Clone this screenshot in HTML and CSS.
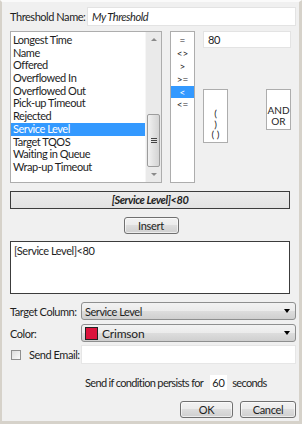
FILE: index.html
```html
<!DOCTYPE html>
<html lang="en">
<head>
    <meta charset="UTF-8">
    <meta name="viewport" content="width=device-width, initial-scale=1.0">
    <title>Threshold</title>
    <link rel="stylesheet" href="styles.css">
</head>
<body>
    <div class="dialog">
        <div class="name-row">
            <label class="name-label">Threshold Name:</label>
            <div class="text-box name-box">My Threshold</div>
        </div>

        <div class="builder">
            <div class="list-box column-list">
                <div class="list-items">
                    <div class="item">Longest Time</div>
                    <div class="item">Name</div>
                    <div class="item">Offered</div>
                    <div class="item">Overflowed In</div>
                    <div class="item">Overflowed Out</div>
                    <div class="item">Pick-up Timeout</div>
                    <div class="item">Rejected</div>
                    <div class="item selected">Service Level</div>
                    <div class="item">Target TQOS</div>
                    <div class="item">Waiting in Queue</div>
                    <div class="item">Wrap-up Timeout</div>
                </div>
                <div class="scrollbar">
                    <div class="arrow up"></div>
                    <div class="track">
                        <div class="thumb"><span class="grip"></span></div>
                    </div>
                    <div class="arrow down"></div>
                </div>
            </div>

            <div class="list-box ops-list">
                <div class="op">=</div>
                <div class="op">&lt;&gt;</div>
                <div class="op">&gt;</div>
                <div class="op">&gt;=</div>
                <div class="op selected">&lt;</div>
                <div class="op">&lt;=</div>
            </div>

            <div class="right-col">
                <div class="text-box value-box">80</div>
                <div class="small-lists">
                    <div class="list-box paren-list">
                        <div class="small-item">(</div>
                        <div class="small-item">)</div>
                        <div class="small-item">( )</div>
                    </div>
                    <div class="list-box logic-list">
                        <div class="small-item">AND</div>
                        <div class="small-item">OR</div>
                    </div>
                </div>
            </div>
        </div>

        <div class="expression">[Service Level]&lt;80</div>

        <div class="insert-row">
            <button class="button insert-btn">Insert</button>
        </div>

        <div class="text-area">[Service Level]&lt;80</div>

        <div class="field-row target-row">
            <label class="field-label">Target Column:</label>
            <div class="combo">
                <span class="combo-text">Service Level</span>
                <span class="combo-arrow"></span>
            </div>
        </div>

        <div class="field-row color-row">
            <label class="field-label">Color:</label>
            <div class="combo">
                <span class="swatch"></span>
                <span class="combo-text crimson">Crimson</span>
                <span class="combo-arrow"></span>
            </div>
        </div>

        <div class="field-row email-row">
            <span class="checkbox"></span>
            <label class="email-label">Send Email:</label>
            <div class="email-box"></div>
        </div>

        <div class="persist-row">
            <span>Send if condition persists for</span>
            <span class="seconds-box">60</span>
            <span>seconds</span>
        </div>

        <div class="footer">
            <button class="button ok-btn">OK</button>
            <button class="button cancel-btn">Cancel</button>
        </div>
    </div>
</body>
</html>
```

FILE: styles.css
```css
* {
    margin: 0;
    padding: 0;
    box-sizing: border-box;
}

body {
    background: #d6d2ca;
    font-family: Lato, "Open Sans", sans-serif;
    font-size: 11px;
    letter-spacing: -0.45px;
    color: #1e1e1e;
    white-space: nowrap;
}

.dialog {
    width: 302px;
    height: 424px;
    background: #f0f0f0;
    border-left: 2px solid #d6d2ca;
    border-right: 3px solid #d6d2ca;
    border-bottom: 3px solid #d6d2ca;
    border-top: 2px solid #fafafa;
    padding: 5px 3px 0 8px;
    overflow: hidden;
}

/* name row */

.name-row {
    display: flex;
    align-items: center;
    height: 19px;
}

.name-label {
    width: 77px;
}

.text-box {
    background: #fff;
    border: 1px solid #e3e3e3;
    padding: 0 4px;
    line-height: 16px;
}

.name-box {
    flex: 1;
    height: 19px;
    font-style: italic;
    line-height: 17px;
}

/* builder */

.builder {
    display: flex;
    gap: 8px;
    margin-top: 5px;
    height: 152px;
}

.list-box {
    background: #fff;
    border: 1px solid #adadad;
}

.column-list {
    width: 152px;
    display: flex;
}

.list-items {
    flex: 1;
    padding-top: 2px;
}

.item {
    height: 12.7px;
    line-height: 12.7px;
    padding-left: 2px;
}

.selected {
    background: #3399ff;
    color: #fff;
}

.scrollbar {
    width: 16px;
    background: #eaeaea;
    border-left: 1px solid #f6f6f6;
    display: flex;
    flex-direction: column;
}

.arrow {
    height: 16px;
    display: flex;
    align-items: center;
    justify-content: center;
}

.arrow::after {
    content: "";
    border-left: 3px solid transparent;
    border-right: 3px solid transparent;
}

.arrow.up::after {
    border-bottom: 3px solid #8a8a8a;
}

.arrow.down::after {
    border-top: 3px solid #8a8a8a;
}

.track {
    flex: 1;
    padding-top: 66px;
}

.thumb {
    height: 53px;
    margin: 0 1px;
    border: 1px solid #9c9c9c;
    border-radius: 2px;
    background: linear-gradient(to right, #f2f2f2, #e2e2e2 50%, #d4d4d4);
    display: flex;
    align-items: center;
    justify-content: center;
}

.grip {
    width: 6px;
    height: 5px;
    border-top: 1px solid #444;
    border-bottom: 1px solid #444;
    position: relative;
}

.grip::after {
    content: "";
    position: absolute;
    left: 0;
    right: 0;
    top: 1px;
    border-top: 1px solid #444;
}

.ops-list {
    width: 25px;
    padding-top: 2px;
}

.op {
    height: 12.9px;
    line-height: 12.9px;
    text-align: center;
    font-size: 10px;
    letter-spacing: 0;
}

.right-col {
    width: 88px;
}

.value-box {
    height: 17px;
    line-height: 15px;
}

.small-lists {
    display: flex;
    justify-content: space-between;
    align-items: flex-start;
    margin-top: 41px;
}

.paren-list {
    width: 25px;
    height: 54px;
    padding-top: 18px;
}

.logic-list {
    width: 25px;
    height: 41px;
    padding-top: 15px;
}

.small-item {
    text-align: center;
    height: 10.5px;
    line-height: 10.5px;
    font-size: 10px;
    letter-spacing: 0;
}

/* expression */

.expression {
    margin-top: 8px;
    width: 280px;
    height: 18px;
    border: 1px solid #3c3c3c;
    background: linear-gradient(#ececec, #e2e2e2);
    text-align: center;
    font-weight: bold;
    font-style: italic;
    line-height: 16px;
}

.insert-row {
    display: flex;
    justify-content: center;
    width: 280px;
    margin-top: 8px;
}

.button {
    font-family: inherit;
    font-size: 11px;
    letter-spacing: -0.3px;
    color: #1e1e1e;
    border: 1px solid #707070;
    border-radius: 3px;
    background: linear-gradient(#f2f2f2 0%, #ebebeb 50%, #dddddd 50%, #cfcfcf 100%);
    box-shadow: inset 0 0 0 1px rgba(255, 255, 255, 0.6);
}

.insert-btn {
    width: 55px;
    height: 17px;
    line-height: 14px;
    margin-left: 2px;
}

.text-area {
    margin-top: 7px;
    width: 280px;
    height: 53px;
    background: #fff;
    border: 1px solid #3c3c3c;
    padding: 2px 3px;
}

/* fields */

.field-row {
    display: flex;
    align-items: center;
}

.target-row {
    margin-top: 8px;
}

.color-row {
    margin-top: 4px;
}

.field-label {
    width: 71px;
}

.combo {
    flex: 1;
    height: 18px;
    border: 1px solid #8e8f8f;
    border-radius: 3px;
    background: linear-gradient(#f2f2f2 0%, #ebebeb 50%, #dddddd 50%, #cfcfcf 100%);
    display: flex;
    align-items: center;
    padding-left: 3px;
    padding-right: 5px;
}

.combo-text {
    flex: 1;
}

.crimson {
    font-size: 12px;
    letter-spacing: -0.2px;
}

.swatch {
    width: 13px;
    height: 13px;
    background: #dc143c;
    border: 1px solid #222;
    margin-right: 4px;
}

.combo-arrow {
    border-left: 3px solid transparent;
    border-right: 3px solid transparent;
    border-top: 4px solid #000;
}

.email-row {
    margin-top: 3px;
    height: 19px;
}

.checkbox {
    width: 10px;
    height: 10px;
    margin-left: 1px;
    border: 1px solid #8f8f8f;
    background: linear-gradient(135deg, #dcdcdc, #fbfbfb);
}

.email-label {
    margin-left: 8px;
    width: 52px;
}

.email-box {
    flex: 1;
    height: 19px;
    background: #fff;
    border: 1px solid #e6e6e6;
}

.persist-row {
    display: flex;
    align-items: center;
    margin-top: 11px;
    padding-left: 75px;
    height: 14px;
    letter-spacing: -0.65px;
}

.seconds-box {
    width: 17px;
    height: 15px;
    margin: 0 5px 0 7px;
    background: #fff;
    text-align: center;
    line-height: 15px;
    letter-spacing: 0;
}

.footer {
    display: flex;
    justify-content: flex-end;
    gap: 7px;
    margin-top: 12px;
}

.ok-btn {
    width: 53px;
    height: 17px;
}

.cancel-btn {
    width: 56px;
    height: 17px;
}
```
